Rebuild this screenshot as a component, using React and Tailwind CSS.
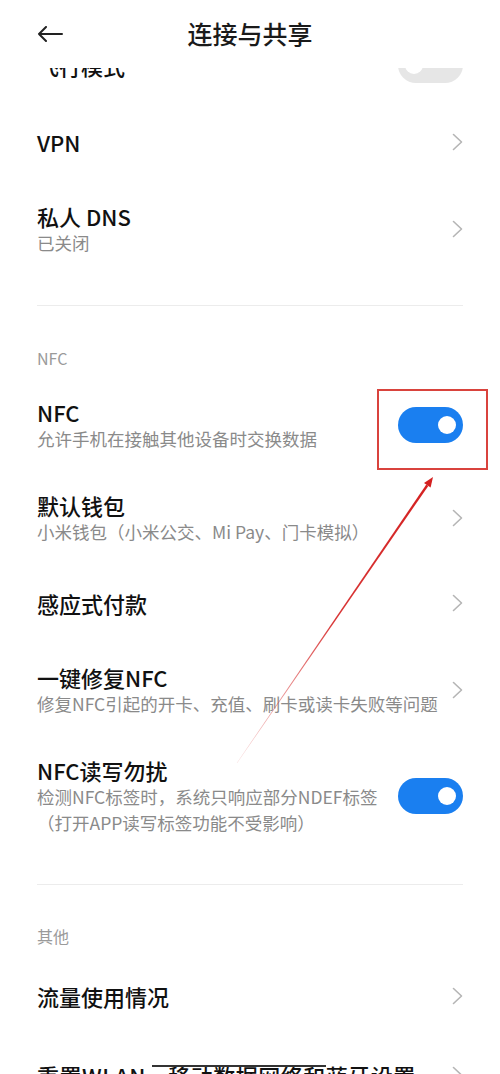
import React from "react";

const Chevron = () => (
  <svg width="11" height="18" viewBox="0 0 11 18" fill="none">
    <path d="M1.5 1.5L9.5 9L1.5 16.5" stroke="#b5b5b5" strokeWidth="1.6" strokeLinecap="round" strokeLinejoin="round" />
  </svg>
);

const Toggle = ({ on = true }) => (
  <div
    className={
      "w-[65px] h-[36px] rounded-full flex items-center px-[7px] " +
      (on ? "bg-[#1a7ff0] justify-end" : "bg-[#e6e6e6] justify-start")
    }
  >
    <div className="w-[18px] h-[18px] rounded-full bg-white" />
  </div>
);

const Row = ({ title, sub, right, h }) => (
  <div className={"flex items-center justify-between px-[37px] " + h}>
    <div className="flex flex-col">
      <div className="text-[22px] leading-[28px] font-medium text-[#111]">{title}</div>
      {sub && <div className="text-[17.5px] leading-[26px] text-[#8a8a8a]">{sub}</div>}
    </div>
    <div className="shrink-0">{right}</div>
  </div>
);

const Divider = ({ h }) => (
  <div className={"flex items-center px-[37px] " + h}>
    <div className="h-px w-full bg-[#ececec]" />
  </div>
);

const Section = ({ text, h }) => (
  <div className={"flex items-center px-[37px] text-[16px] text-[#9a9a9a] " + h}>{text}</div>
);

export default function App() {
  return (
    <div className="relative w-[500px] h-[1074px] overflow-hidden bg-white font-['Noto_Sans_CJK_SC','Noto_Sans',sans-serif]">
      <div className="h-[68px] flex items-center px-[37px] bg-white">
        <svg width="26" height="16" viewBox="0 0 26 16" fill="none">
          <path d="M25 8H2M9 1L2 8L9 15" stroke="#222" strokeWidth="2" strokeLinecap="round" strokeLinejoin="round" />
        </svg>
        <div className="flex-1 text-center text-[25px] font-medium text-[#1a1a1a]">连接与共享</div>
        <div className="w-[26px]" />
      </div>

      <div className="h-[32px] overflow-hidden">
        <div className="-mt-[40px]">
          <Row title="飞行模式" right={<Toggle on={false} />} h="h-[74px]" />
        </div>
      </div>

      <Row title="VPN" right={<Chevron />} h="h-[84px]" />
      <Row title="私人 DNS" sub="已关闭" right={<Chevron />} h="h-[90px]" />
      <Divider h="h-[62px]" />
      <Section text="NFC" h="h-[44px]" />
      <Row title="NFC" sub="允许手机在接触其他设备时交换数据" right={<Toggle />} h="h-[90px]" />
      <Row title="默认钱包" sub="小米钱包（小米公交、Mi Pay、门卡模拟）" right={<Chevron />} h="h-[96px]" />
      <Row title="感应式付款" right={<Chevron />} h="h-[74px]" />
      <Row title="一键修复NFC" sub="修复NFC引起的开卡、充值、刷卡或读卡失败等问题" right={<Chevron />} h="h-[100px]" />
      <Row
        title="NFC读写勿扰"
        sub={
          <>
            检测NFC标签时，系统只响应部分NDEF标签
            <br />
            （打开APP读写标签功能不受影响）
          </>
        }
        right={<Toggle />}
        h="h-[112px]"
      />
      <Divider h="h-[64px]" />
      <Section text="其他" h="h-[40px]" />
      <Row title="流量使用情况" right={<Chevron />} h="h-[80px]" />
      <Row
        title={
          <span className="tracking-[0.5px]">
            重置WLAN
            <span className="relative">
              、移动数据网络和
              <span className="absolute left-[6px] right-0 top-[6px] h-[2px] bg-[#333]" />
            </span>
            蓝牙设置
          </span>
        }
        right={<Chevron />}
        h="h-[78px]"
      />

      {/* annotation */}
      <div className="absolute left-[377px] top-[389px] w-[111px] h-[81px] border-2 border-[#d9433d]" />
      <svg className="absolute inset-0 pointer-events-none" width="500" height="1074" viewBox="0 0 500 1074">
        <defs>
          <linearGradient id="fade" x1="237" y1="763" x2="432" y2="479" gradientUnits="userSpaceOnUse">
            <stop offset="0" stopColor="#e06060" stopOpacity="0.3" />
            <stop offset="0.5" stopColor="#d42020" stopOpacity="0.9" />
            <stop offset="1" stopColor="#d42020" />
          </linearGradient>
        </defs>
        <polygon points="237.16,763.11 236.84,762.89 426.3,484.5 428.3,485.9" fill="url(#fade)" />
        <polygon points="433,477 430.6,487.5 424,483" fill="#d42020" />
      </svg>
    </div>
  );
}
